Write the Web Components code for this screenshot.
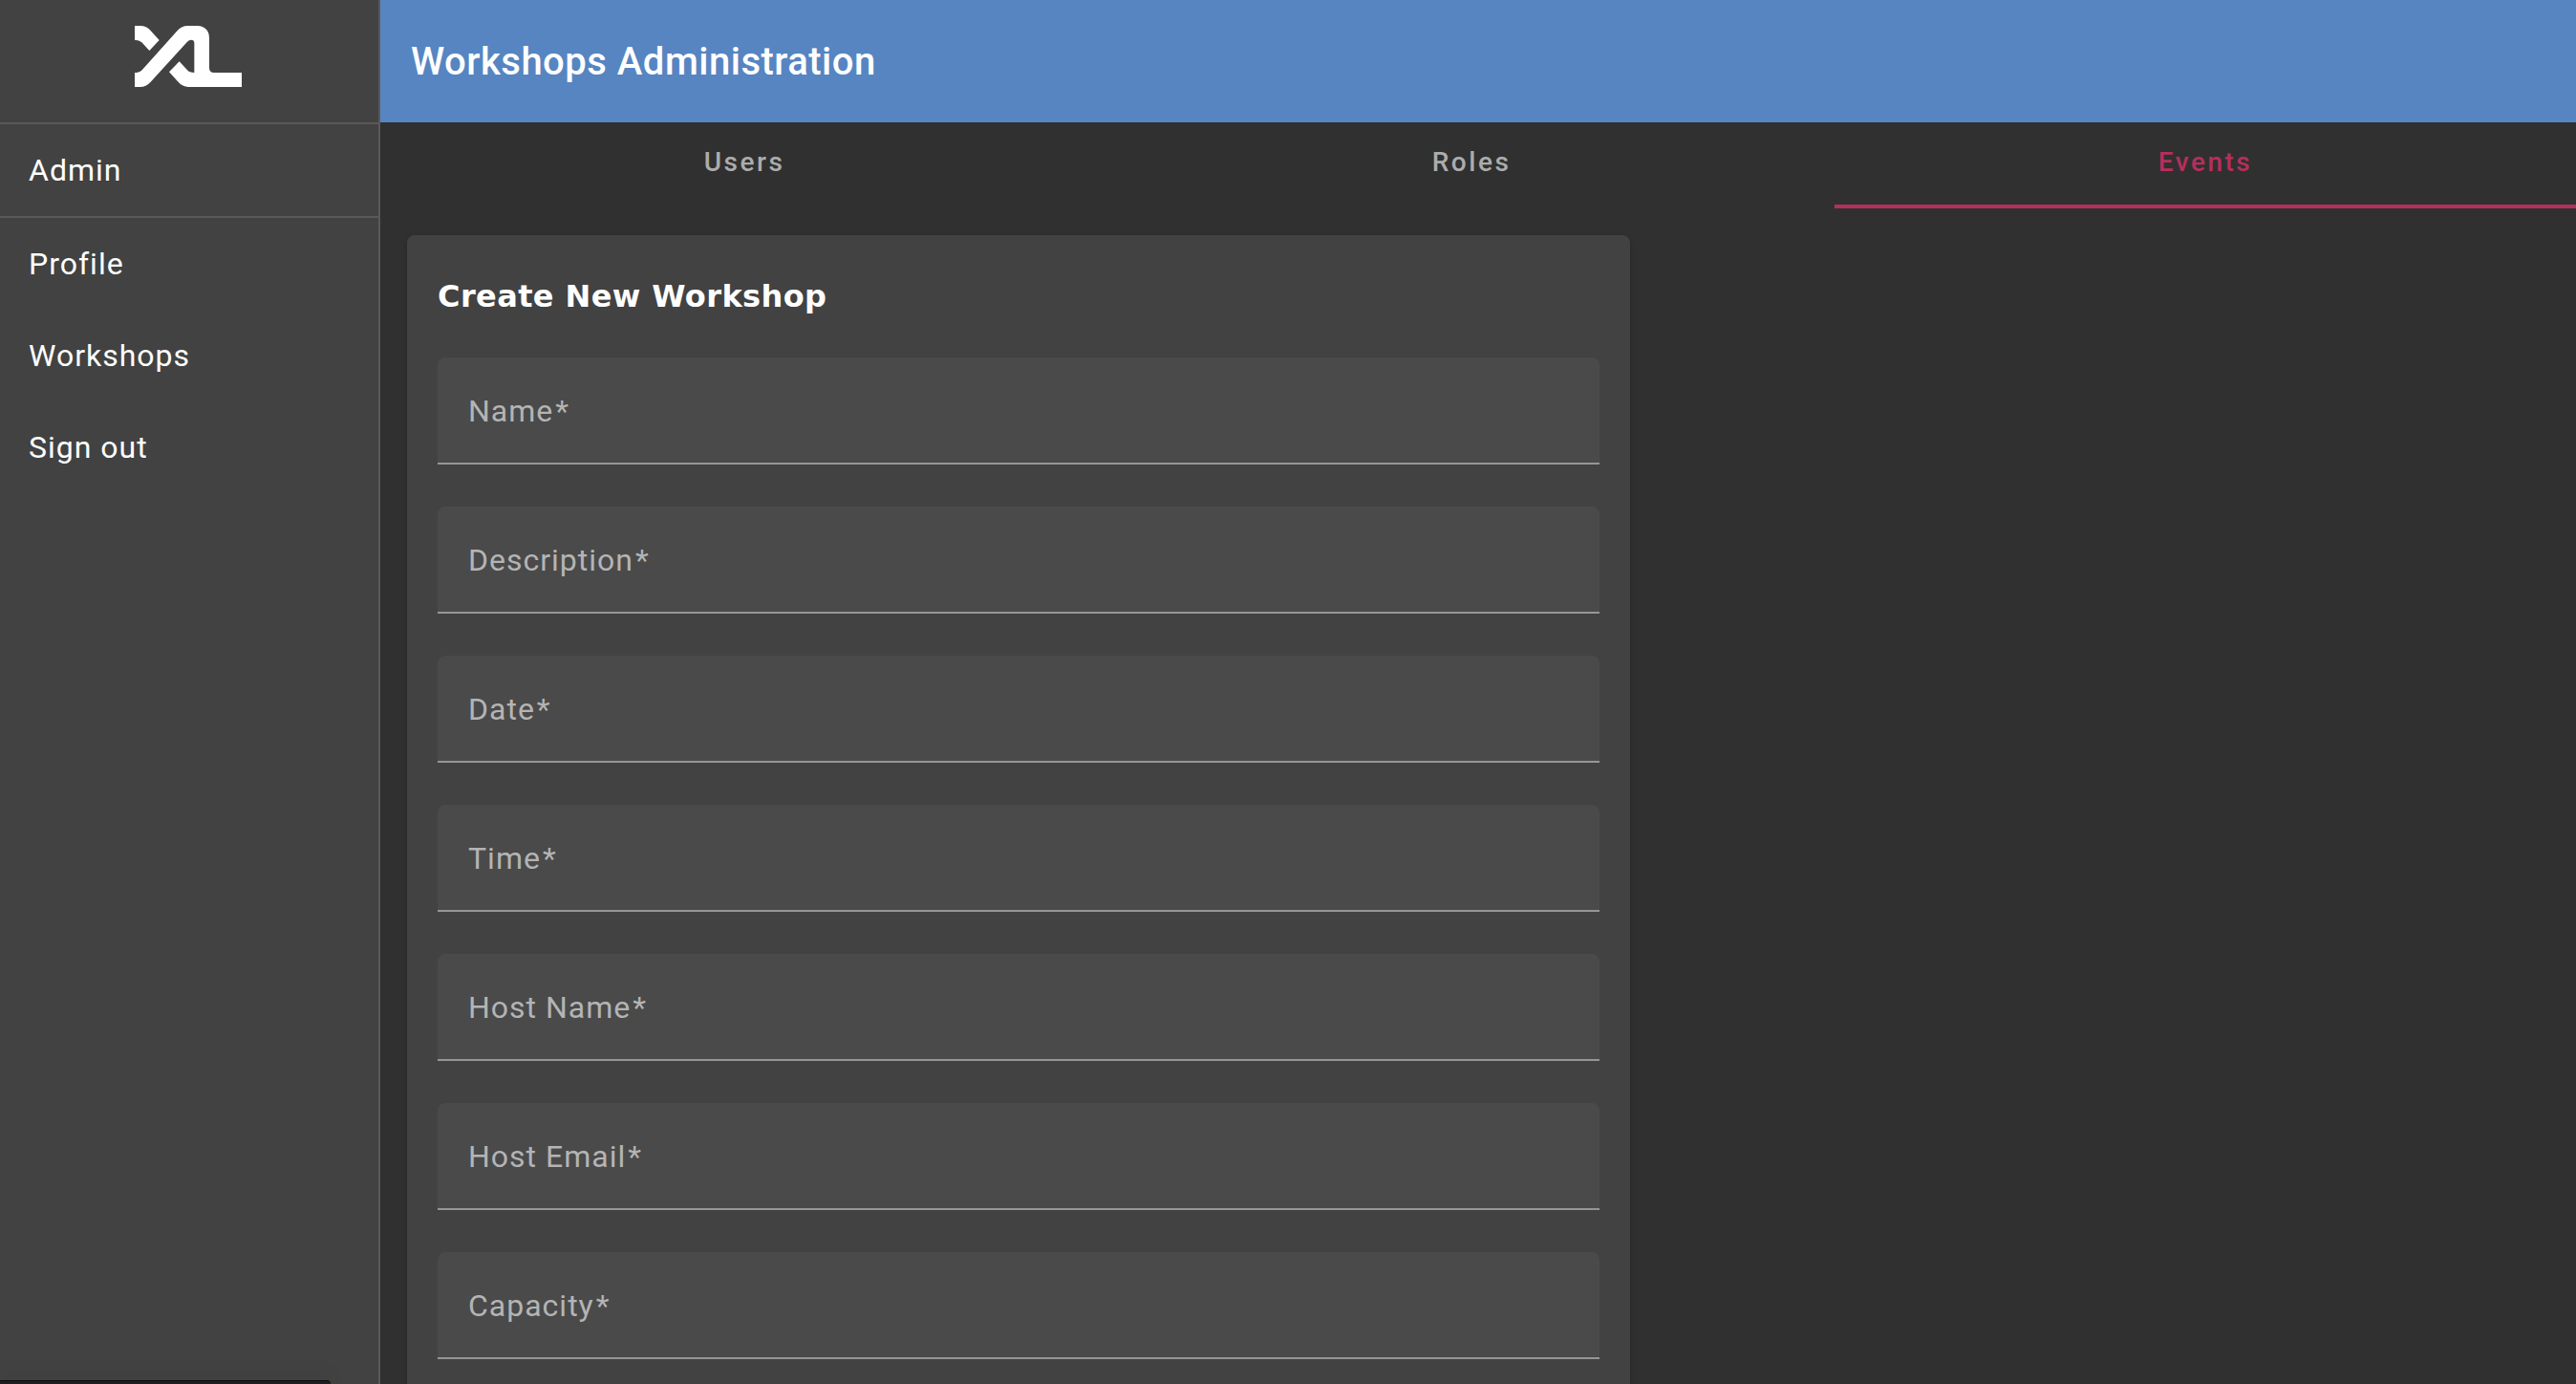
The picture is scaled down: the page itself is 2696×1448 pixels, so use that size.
<!DOCTYPE html>
<html lang="en">
<head>
<meta charset="utf-8">
<title>Workshops Administration</title>
<style>
  :root {
    --surface: #424242;
    --background: #303030;
    --divider: #595959;
    --primary: #5685c1;
    --accent: #b52f5c;
    --field: #4a4a4a;
    --muted: #b4b4b4;
  }
  html, body { margin: 0; height: 100%; }
  body {
    background: var(--background);
    color: #fff;
    font-family: Roboto, "Liberation Sans", sans-serif;
    font-size: 32px;
    overflow: hidden;
  }
</style>
</head>
<body>
<app-shell>
  <side-nav slot="nav">
    <brand-logo slot="brand"></brand-logo>
    <nav-item divided>Admin</nav-item>
    <nav-item>Profile</nav-item>
    <nav-item>Workshops</nav-item>
    <nav-item>Sign out</nav-item>
  </side-nav>
  <page-header>Workshops Administration</page-header>
  <tab-bar>
    <tab-item>Users</tab-item>
    <tab-item>Roles</tab-item>
    <tab-item active>Events</tab-item>
  </tab-bar>
  <form-card>
    <span slot="title">Create New Workshop</span>
    <text-field>Name</text-field>
    <text-field>Description</text-field>
    <text-field>Date</text-field>
    <text-field>Time</text-field>
    <text-field>Host Name</text-field>
    <text-field>Host Email</text-field>
    <text-field>Capacity</text-field>
  </form-card>
  <status-bubble slot="overlay"></status-bubble>
</app-shell>

<script>
  const define = (name, html, setup) => {
    const template = document.createElement('template');
    template.innerHTML = html;
    customElements.define(name, class extends HTMLElement {
      constructor() {
        super();
        this.attachShadow({ mode: 'open' }).append(template.content.cloneNode(true));
      }
      connectedCallback() {
        if (setup) setup(this, this.shadowRoot);
      }
    });
  };

  define('app-shell', `
    <style>
      :host { display: grid; grid-template-columns: 398px 1fr; height: 100vh; overflow: hidden; }
      main { min-width: 0; overflow-y: auto; scrollbar-width: none; }
    </style>
    <slot name="nav"></slot>
    <main><slot></slot></main>
    <slot name="overlay"></slot>`);

  define('side-nav', `
    <style>
      :host { display: block; background: var(--surface); border-right: 2px solid var(--divider); }
      .brand {
        display: grid; place-items: center; box-sizing: border-box;
        height: 130px; padding: 0 2px 10px 0; border-bottom: 2px solid var(--divider);
      }
    </style>
    <div class="brand"><slot name="brand"></slot></div>
    <nav><slot></slot></nav>`);

  define('brand-logo', `
    <style>
      :host { display: block; line-height: 0; }
      svg { width: 112px; height: 64px; }
    </style>
    <svg viewBox="0 0 336 192" fill="#fff" role="img" aria-label="XL">
      <path d="M0 0H18Q35 0 47 12L77 45L46 78L22 52Q14 44 0 44Z"/>
      <path d="M0 147H6Q16 147 23 139L134 15Q148 0 166 0H196Q234 2 234 40V132Q234 147 249 147H336V192H168Q150 191 138 178L108 145L140 112L165 139Q172 147 187 147V54Q187 44 177 44Q171 44 165 50L50 176Q36 192 16 192H0Z"/>
    </svg>`);

  define('nav-item', `
    <style>
      :host { display: block; }
      :host([divided]) { border-bottom: 2px solid var(--divider); }
      a {
        display: flex; align-items: center; height: 96px; padding: 0 30px;
        color: inherit; text-decoration: none; letter-spacing: 1px;
      }
    </style>
    <a href="#"><slot></slot></a>`);

  define('page-header', `
    <style>
      :host { display: flex; align-items: center; height: 128px; padding: 0 32px; background: var(--primary); }
      h1 { margin: 0; font-size: 40px; font-weight: 500; letter-spacing: 0.0125em; }
    </style>
    <h1><slot></slot></h1>`);

  define('tab-bar', `
    <style>
      :host { display: flex; }
    </style>
    <slot></slot>`, host => host.setAttribute('role', 'tablist'));

  define('tab-item', `
    <style>
      :host { display: flex; flex: 1 0 auto; }
      button {
        flex: 1; box-sizing: border-box; height: 90px; padding: 0 48px 4px;
        border: 0; border-bottom: 4px solid transparent; background: none;
        color: #acacac; font: 500 28px Roboto, "Liberation Sans", sans-serif; letter-spacing: 0.09em;
      }
      :host([active]) button { color: var(--accent); border-color: var(--accent); }
    </style>
    <button type="button" role="tab"><slot></slot></button>`,
    (host, root) => root.querySelector('button').setAttribute('aria-selected', host.hasAttribute('active')));

  define('form-card', `
    <style>
      :host {
        display: block; box-sizing: border-box; max-width: 1280px; margin: 28px;
        padding: 32px 32px 44px; border-radius: 8px; background: var(--surface);
        box-shadow: 0 4px 2px -2px rgba(0,0,0,.2), 0 2px 2px rgba(0,0,0,.14), 0 2px 6px rgba(0,0,0,.12);
      }
      h2 {
        margin: 0 0 32px; font: bold 32px/64px "DejaVu Sans", Verdana, sans-serif; letter-spacing: 0.0125em;
      }
      form { display: grid; gap: 44px; }
    </style>
    <h2><slot name="title"></slot></h2>
    <form><slot></slot></form>`);

  define('text-field', `
    <style>
      :host { display: grid; height: 112px; }
      label, input { grid-area: 1 / 1; }
      label {
        align-self: center; justify-self: start; margin-left: 32px;
        color: var(--muted); letter-spacing: 1px; z-index: 1; pointer-events: none;
      }
      .mark { margin-left: 2px; }
      input {
        box-sizing: border-box; width: 100%; height: 112px; padding: 32px 32px 0; margin: 0;
        border: 0; border-bottom: 2px solid #969696; border-radius: 8px 8px 0 0;
        background: var(--field); color: #fff; font: inherit; outline: 0;
      }
      input:focus + label, input:valid + label { align-self: start; font-size: 24px; }
    </style>
    <input id="control" type="text" required>
    <label for="control"><slot></slot><span class="mark">*</span></label>`);

  define('status-bubble', `
    <style>
      :host {
        position: absolute; left: 0; bottom: 0; width: 346px; height: 4px;
        box-sizing: border-box; border-top: 1px solid #0c0c0d; border-radius: 0 4px 0 0;
        background: #1e1d22; box-shadow: 0 0 24px rgba(0,0,0,.2);
      }
    </style>`);
</script>
</body>
</html>
